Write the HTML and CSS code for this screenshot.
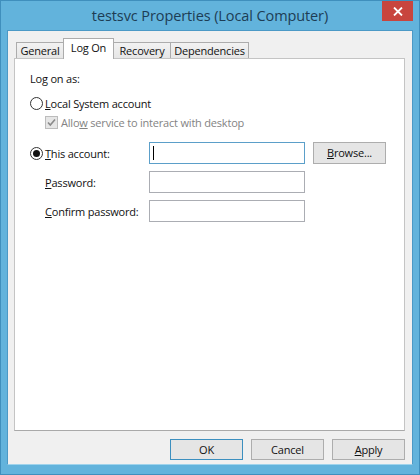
FILE: index.html
```html
<!DOCTYPE html>
<html lang="en">
<head>
  <meta charset="UTF-8">
  <title>testsvc Properties (Local Computer)</title>
  <link rel="stylesheet" href="styles.css">
</head>
<body>
  <div class="window">
    <div class="titlebar">
      <span></span>
      <span class="title">testsvc Properties (Local Computer)</span>
      <span class="close-btn">
        <svg width="10" height="9" viewBox="0 0 10 9">
          <path d="M1 0.5 L9 8.5 M9 0.5 L1 8.5" stroke="#fff" stroke-width="1.8"/>
        </svg>
      </span>
    </div>

    <div class="client">
      <div class="tabs">
        <div class="tab tab-general">General</div>
        <div class="tab tab-logon active">Log On</div>
        <div class="tab tab-recovery">Recovery</div>
        <div class="tab tab-deps">Dependencies</div>
      </div>

      <div class="panel">
        <div class="line">Log on as:</div>

        <div class="line radio-row first">
          <span class="radio"></span>
          <span><u>L</u>ocal System account</span>
        </div>

        <div class="line check-row disabled">
          <svg class="checkbox" width="13" height="13" viewBox="0 0 13 13">
            <rect x="0.5" y="0.5" width="12" height="12" fill="#e6e6e6" stroke="#bcbcbc"/>
            <path d="M3 6.5 L5.3 9 L10 3.5" fill="none" stroke="#8a8a8a" stroke-width="1.6"/>
          </svg>
          <span>Allo<u>w</u> service to interact with desktop</span>
        </div>

        <div class="account-grid">
          <div class="line radio-row">
            <span class="radio checked"></span>
            <span><u>T</u>his account:</span>
          </div>
          <div class="textbox focused"><span class="caret"></span></div>
          <div class="btn browse"><u>B</u>rowse...</div>

          <div class="line field-label"><u>P</u>assword:</div>
          <div class="textbox"></div>
          <div></div>

          <div class="line field-label"><u>C</u>onfirm password:</div>
          <div class="textbox"></div>
          <div></div>
        </div>
      </div>

      <div class="footer">
        <div class="btn default">OK</div>
        <div class="btn">Cancel</div>
        <div class="btn"><u>A</u>pply</div>
      </div>
    </div>
  </div>
</body>
</html>
```

FILE: styles.css
```css
body {
  margin: 0;
  background-color: #62b3dc;
  font-family: "Open Sans", "Liberation Sans", Arial, sans-serif;
  font-size: 11px;
  letter-spacing: -0.2px;
  color: #111;
}

.window {
  width: 420px;
  height: 475px;
  box-sizing: border-box;
  background-color: #62b3dc;
  border: 1px solid #3f8fbd;
  display: flex;
  flex-direction: column;
}

/* title bar */
.titlebar {
  height: 29px;
  display: grid;
  grid-template-columns: 1fr auto 1fr;
  align-items: start;
}

.title {
  font-size: 14.5px;
  color: #1d3d55;
  line-height: 29px;
  letter-spacing: -0.1px;
}

.close-btn {
  justify-self: end;
  width: 31px;
  height: 20px;
  margin-right: 6px;
  background-color: #c8453e;
  display: flex;
  justify-content: center;
  align-items: center;
}

/* client area */
.client {
  flex: 1;
  margin: 0 6px 9px 6px;
  border: 1px solid #4b99c6;
  border-bottom-color: #9fd3ec;
  background-color: #f0f0f0;
  padding: 7px 7px 0 6px;
  display: flex;
  flex-direction: column;
}

.tabs {
  height: 20px;
  display: flex;
  align-items: flex-end;
  padding-left: 2px;
}

.tab {
  box-sizing: border-box;
  height: 16px;
  border: 1px solid #acacac;
  border-bottom: none;
  background-color: #f0f0f0;
  background-image: linear-gradient(#f2f2f2, #e6e6e6);
  text-align: center;
  line-height: 15px;
  margin-right: -1px;
}

.tab.active {
  height: 21px;
  margin-bottom: -1px;
  background: #fff;
  position: relative;
  z-index: 1;
  line-height: 18px;
}

.tab-general { width: 48px; }
.tab-logon { width: 51px; }
.tab-recovery { width: 58px; }
.tab-deps { width: 79px; }

.panel {
  flex: 1;
  background-color: #fff;
  border: 1px solid #c4c4c4;
  border-bottom-color: #a9a9a9;
  padding: 12px 15px 0 15px;
}

.line {
  line-height: 15px;
  white-space: nowrap;
}

.radio-row, .check-row {
  display: flex;
  align-items: center;
}

.radio-row.first {
  margin-top: 10px;
}

.radio {
  box-sizing: border-box;
  width: 13px;
  height: 13px;
  border: 1px solid #333;
  border-radius: 50%;
  background-color: #fff;
  margin-right: 2px;
  display: flex;
  justify-content: center;
  align-items: center;
}

.radio.checked::after {
  content: "";
  width: 7px;
  height: 7px;
  border-radius: 50%;
  background-color: #111;
}

.check-row {
  margin-top: 4px;
  padding-left: 15px;
}

.checkbox {
  margin-right: 3px;
}

.disabled {
  color: #838383;
}

.account-grid {
  margin-top: 12px;
  display: grid;
  grid-template-columns: 119px 156px 81px;
  grid-auto-rows: 22px;
  row-gap: 7px;
  align-items: center;
}

.field-label {
  padding-left: 15px;
}

.textbox {
  box-sizing: border-box;
  height: 22px;
  border: 1px solid #abadb3;
  background-color: #fff;
  display: flex;
  align-items: center;
  padding-left: 3px;
}

.textbox.focused {
  border-color: #5b9fc9;
}

.caret {
  width: 1px;
  height: 14px;
  background-color: #000;
}

/* buttons */
.btn {
  box-sizing: border-box;
  width: 73px;
  height: 21px;
  border: 1px solid #adadad;
  background-color: #e5e5e5;
  text-align: center;
  line-height: 19px;
}

.btn.default {
  border-color: #3c8fbf;
}

.browse {
  margin-left: 8px;
  height: 22px;
  line-height: 20px;
}

.footer {
  height: 33px;
  display: flex;
  justify-content: flex-end;
  align-items: flex-start;
  gap: 8px;
  padding-top: 8px;
  box-sizing: border-box;
}
```
